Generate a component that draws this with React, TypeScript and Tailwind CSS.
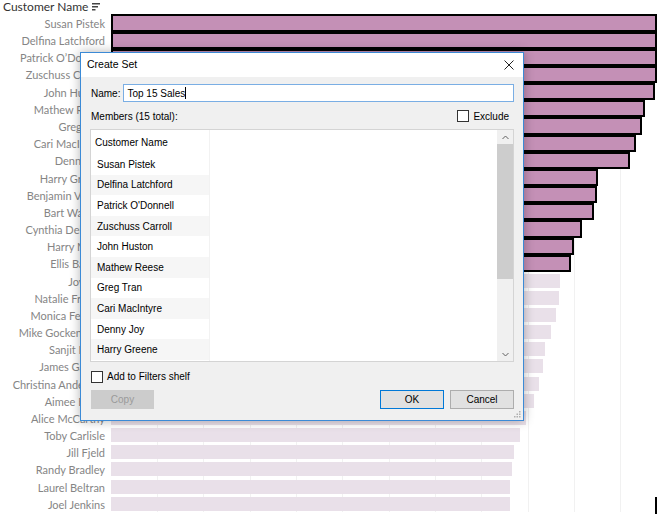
import React from "react";

type Row = { name: string; end: number; sel: boolean };

const rows: Row[] = [
  { name: "Susan Pistek", end: 657, sel: true },
  { name: "Delfina Latchford", end: 657, sel: true },
  { name: "Patrick O’Donnell", end: 657, sel: true },
  { name: "Zuschuss Carroll", end: 657, sel: true },
  { name: "John Huston", end: 655, sel: true },
  { name: "Mathew Reese", end: 645, sel: true },
  { name: "Greg Tran", end: 642, sel: true },
  { name: "Cari MacIntyre", end: 636, sel: true },
  { name: "Denny Joy", end: 630, sel: true },
  { name: "Harry Greene", end: 598, sel: true },
  { name: "Benjamin Venier", end: 597, sel: true },
  { name: "Bart Watters", end: 594, sel: true },
  { name: "Cynthia Delaney", end: 582, sel: true },
  { name: "Harry Marie", end: 574, sel: true },
  { name: "Ellis Ballard", end: 571, sel: true },
  { name: "Joy Bell", end: 560, sel: false },
  { name: "Natalie Fritzler", end: 559, sel: false },
  { name: "Monica Federle", end: 556, sel: false },
  { name: "Mike Gockenbach", end: 551, sel: false },
  { name: "Sanjit Engle", end: 545, sel: false },
  { name: "James Galang", end: 543, sel: false },
  { name: "Christina Anderson", end: 539, sel: false },
  { name: "Aimee Bixby", end: 534, sel: false },
  { name: "Alice McCarthy", end: 526, sel: false },
  { name: "Toby Carlisle", end: 520, sel: false },
  { name: "Jill Fjeld", end: 514, sel: false },
  { name: "Randy Bradley", end: 512, sel: false },
  { name: "Laurel Beltran", end: 510, sel: false },
  { name: "Joel Jenkins", end: 510, sel: false },
];

const members = [
  "Susan Pistek",
  "Delfina Latchford",
  "Patrick O'Donnell",
  "Zuschuss Carroll",
  "John Huston",
  "Mathew Reese",
  "Greg Tran",
  "Cari MacIntyre",
  "Denny Joy",
  "Harry Greene",
];

const grid = [46, 92, 139, 185, 231, 278, 324, 370, 417, 463, 509];

const SortIcon = () => (
  <svg width="9" height="8" viewBox="0 0 9 8" className="ml-[4px]">
    <rect x="0" y="0" width="8" height="1.5" fill="#444" />
    <rect x="0" y="3" width="6" height="1.5" fill="#444" />
    <rect x="0" y="6" width="3.5" height="1.5" fill="#444" />
  </svg>
);

const Check = () => (
  <span className="inline-block w-[12px] h-[12px] border border-[#333] bg-white" />
);

function Chart() {
  return (
    <div className="flex flex-col font-['Lato',sans-serif]">
      <div className="h-[14.4px] flex items-center pl-[3px] text-[12px] text-[#333] leading-none">
        Customer Name
        <SortIcon />
      </div>
      <div className="relative">
        <div className="absolute inset-y-0 left-[111px] right-0">
          {grid.map((g) => (
            <div
              key={g}
              className="absolute top-0 bottom-0 w-px bg-[#f1f1f1]"
              style={{ left: g }}
            />
          ))}
        </div>
        {rows.map((r) => (
          <div key={r.name} className="relative h-[17.18px] flex items-center">
            <div className="w-[111px] shrink-0 pr-[6px] pt-[1px] text-right text-[11px] text-[#858585] leading-none whitespace-nowrap">
              {r.name}
            </div>
            <div className="flex-1 h-full flex items-center">
              {r.sel ? (
                <div
                  className="h-full border-2 border-black bg-[#c490b6]"
                  style={{ width: r.end - 111 }}
                />
              ) : (
                <div
                  className="h-[14px] bg-[#e9e0e9]"
                  style={{ width: r.end - 111 }}
                />
              )}
            </div>
          </div>
        ))}
      </div>
    </div>
  );
}

function Dialog() {
  return (
    <div className="absolute left-[80px] top-[52px] w-[444px] h-[369px] border border-[#3b8ad6] bg-[#f0f0f0] shadow-[0_0_10px_rgba(0,0,0,0.3)] flex flex-col font-['Liberation_Sans',Arial,sans-serif] text-[10px] text-black">
      <div className="h-[24px] bg-white flex items-center justify-between pl-[6px] pr-[9px] shrink-0">
        <span className="text-[10.5px]">Create Set</span>
        <svg width="10" height="10" viewBox="0 0 10 10">
          <path d="M0.5 0.5 L9.5 9.5 M9.5 0.5 L0.5 9.5" stroke="#222" strokeWidth="1" />
        </svg>
      </div>
      <div className="flex-1 flex flex-col pl-[9px] pr-[9px] pt-[7px] relative">
        <div className="flex items-center h-[18px] gap-[3px]">
          <span className="shrink-0 pl-[1px]">Name:</span>
          <div className="flex-1 h-full border border-[#7aaee4] bg-white flex items-center pl-[3px]">
            <span>Top 15 Sales</span>
            <span className="inline-block w-px h-[12px] bg-black" />
          </div>
        </div>
        <div className="mt-[7px] h-[14px] flex items-center justify-between">
          <span className="pl-[1px]">Members (15 total):</span>
          <div className="flex items-center gap-[4px] pr-[5px]">
            <Check />
            <span>Exclude</span>
          </div>
        </div>
        <div className="mt-[6px] h-[233px] border border-[#d4d4d4] bg-white flex">
          <div className="w-[119px] shrink-0 flex flex-col border-r border-[#f2f2f2]">
            <div className="h-[24px] flex items-center pl-[4px] shrink-0">Customer Name</div>
            {members.map((m, i) => (
              <div
                key={m}
                className={`h-[20.6px] shrink-0 flex items-center pl-[6px] ${i % 2 === 1 ? "bg-[#f6f6f6]" : "bg-white"}`}
              >
                {m}
              </div>
            ))}
          </div>
          <div className="flex-1" />
          <div className="w-[16px] shrink-0 bg-[#f0f0f0] flex flex-col items-center">
            <div className="h-[14px] w-full flex items-center justify-center">
              <svg width="7" height="5" viewBox="0 0 7 5">
                <path d="M0.5 4 L3.5 1 L6.5 4" stroke="#606060" fill="none" strokeWidth="1" />
              </svg>
            </div>
            <div className="w-full h-[135px] bg-[#cdcdcd]" />
            <div className="flex-1" />
            <div className="h-[14px] w-full flex items-center justify-center">
              <svg width="7" height="5" viewBox="0 0 7 5">
                <path d="M0.5 1 L3.5 4 L6.5 1" stroke="#606060" fill="none" strokeWidth="1" />
              </svg>
            </div>
          </div>
        </div>
        <div className="mt-[8px] h-[13px] flex items-center gap-[4px] pl-[1px]">
          <Check />
          <span>Add to Filters shelf</span>
        </div>
        <div className="mt-[7px] h-[19px] flex items-center">
          <div className="w-[63px] h-full bg-[#cccccc] text-[#9a9a9a] flex items-center justify-center ml-[1px]">
            Copy
          </div>
          <div className="flex-1" />
          <div className="w-[64px] h-full bg-[#e1e1e1] border border-[#0078d7] flex items-center justify-center">
            OK
          </div>
          <div className="w-[64px] h-full bg-[#e1e1e1] border border-[#adadad] flex items-center justify-center ml-[6px]">
            Cancel
          </div>
        </div>
        <svg width="7" height="7" viewBox="0 0 7 7" className="absolute right-[2px] bottom-[2px]">
          <rect x="5" y="0" width="1.5" height="1.5" fill="#b0b0b0" />
          <rect x="2.5" y="2.5" width="1.5" height="1.5" fill="#b0b0b0" />
          <rect x="5" y="2.5" width="1.5" height="1.5" fill="#b0b0b0" />
          <rect x="0" y="5" width="1.5" height="1.5" fill="#b0b0b0" />
          <rect x="2.5" y="5" width="1.5" height="1.5" fill="#b0b0b0" />
          <rect x="5" y="5" width="1.5" height="1.5" fill="#b0b0b0" />
        </svg>
      </div>
    </div>
  );
}

export default function App() {
  return (
    <div className="relative w-[659px] h-[516px] overflow-hidden bg-white">
      <Chart />
      <Dialog />
      <div className="absolute left-[655px] top-[497px] w-[2px] h-[17px] bg-black" />
    </div>
  );
}
